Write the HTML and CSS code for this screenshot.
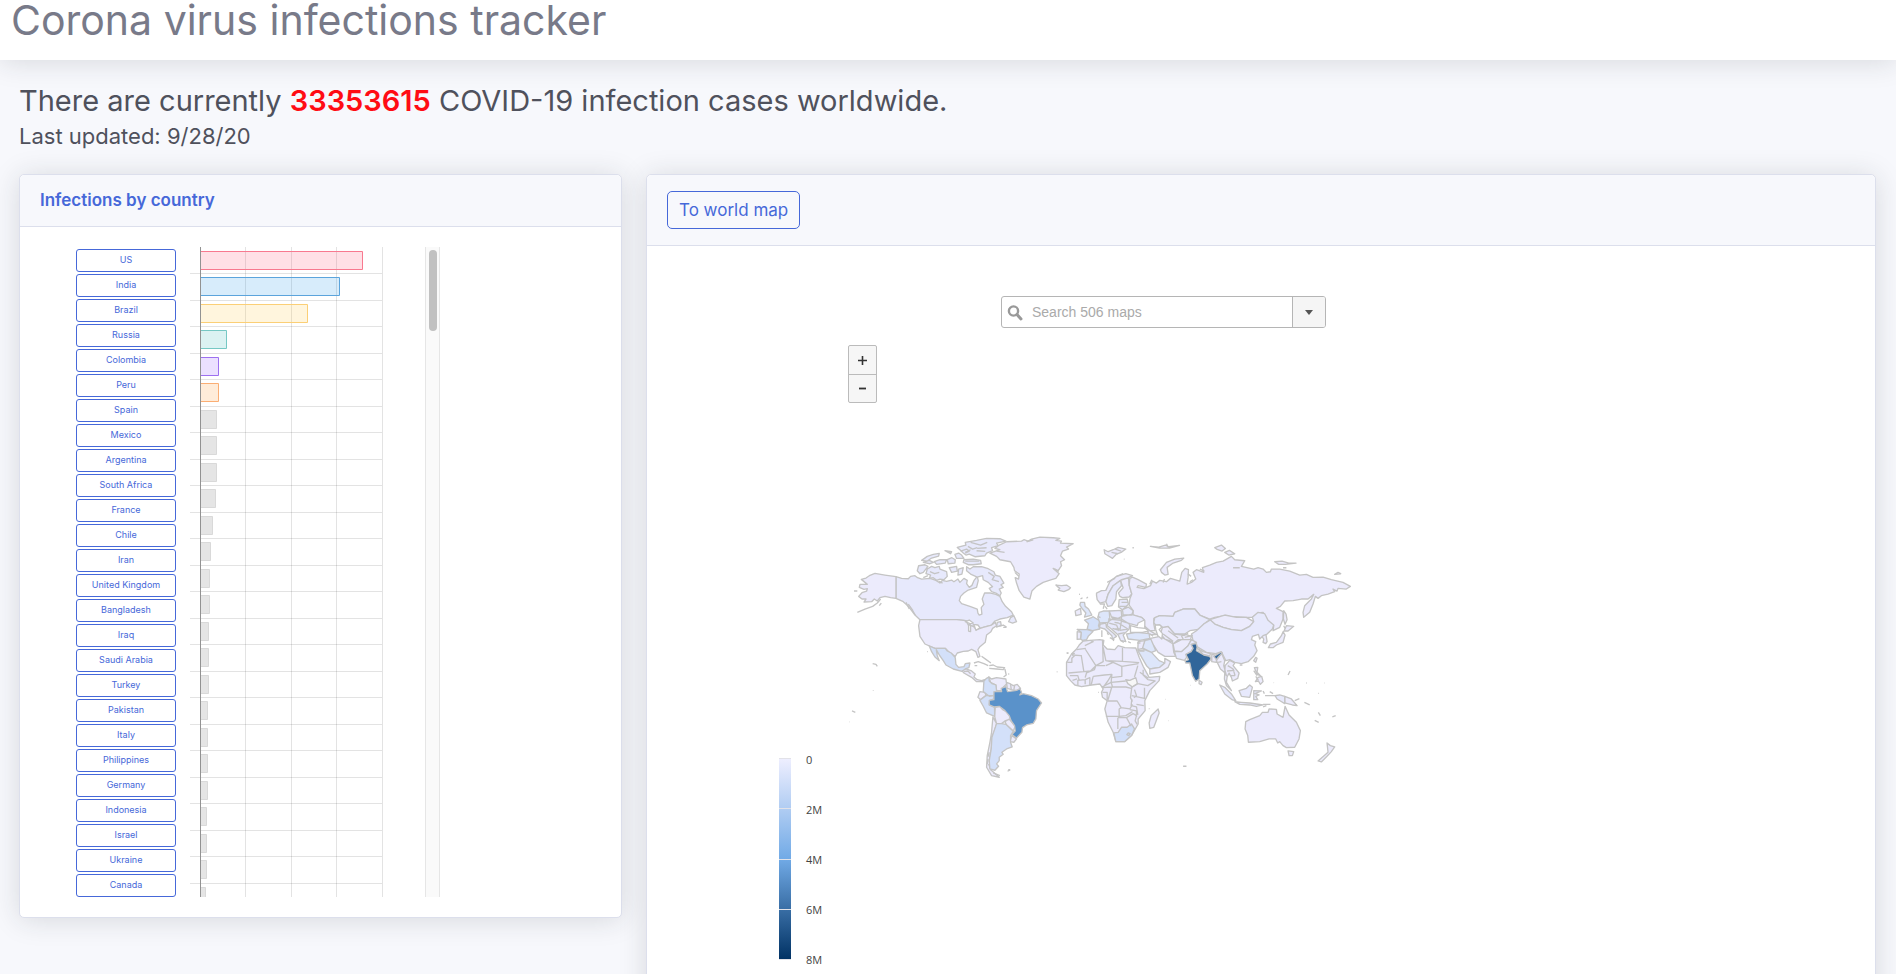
FILE: index.html
```html
<!DOCTYPE html>
<html lang="en">
<head>
<meta charset="utf-8">
<title>Corona virus infections tracker</title>
<link rel="stylesheet" href="styles.css">
</head>
<body>
<header class="topbar"><h1>Corona virus infections tracker</h1></header>
<main class="page">
  <section class="summary">
    <h2>There are currently <strong>33353615</strong> COVID-19 infection cases worldwide.</h2>
    <p>Last updated: 9/28/20</p>
  </section>
  <div class="cards">
    <section class="card">
      <div class="card-header"><h3>Infections by country</h3></div>
      <div class="card-body list-body">
        <div class="scroller">
          <div class="countries">
            <button>US</button><button>India</button><button>Brazil</button><button>Russia</button><button>Colombia</button><button>Peru</button><button>Spain</button><button>Mexico</button><button>Argentina</button><button>South Africa</button><button>France</button><button>Chile</button><button>Iran</button><button>United Kingdom</button><button>Bangladesh</button><button>Iraq</button><button>Saudi Arabia</button><button>Turkey</button><button>Pakistan</button><button>Italy</button><button>Philippines</button><button>Germany</button><button>Indonesia</button><button>Israel</button><button>Ukraine</button><button>Canada</button>
          </div>
          <svg class="bars" width="194" height="650" viewBox="0 0 194 650" aria-label="Infections bar chart"></svg>
          <div class="track"><div class="thumb"></div></div>
        </div>
      </div>
    </section>
    <section class="card">
      <div class="card-header map-header"><button class="outline">To world map</button></div>
      <div class="card-body map-body">
        <div class="search">
          <svg width="17" height="17" viewBox="0 0 17 17" aria-hidden="true"><circle cx="6.5" cy="7" r="4.6" fill="none" stroke="#999" stroke-width="2.4"/><path d="M10 10.500l4 4.500" stroke="#999" stroke-width="3" stroke-linecap="round"/></svg>
          <input type="text" placeholder="Search 506 maps" aria-label="Search maps">
          <button aria-label="Show maps"><svg width="8" height="5" viewBox="0 0 8 5"><path d="M0 0h8L4 5z" fill="#555"/></svg></button>
        </div>
        <div class="zoom">
          <button aria-label="Zoom in"><svg width="9" height="9" viewBox="0 0 9 9"><path d="M0 4.5h9M4.5 0v9" stroke="#333" stroke-width="1.6"/></svg></button>
          <button aria-label="Zoom out"><svg width="9" height="9" viewBox="0 0 9 9"><path d="M1 4.5h7" stroke="#333" stroke-width="1.8"/></svg></button>
        </div>
        <div class="map-row">
          <div class="legend">
            <div class="ramp"><i></i><i></i><i></i><i></i><i></i></div>
            <div class="ticks"><span>0</span><span>2M</span><span>4M</span><span>6M</span><span>8M</span></div>
          </div>
          <svg class="world" width="533" height="270" viewBox="0 0 1600 810" aria-label="World map">
            <g class="canada">
              <path d="M168,173L185,178 205,179 212,172 225,170 233,176 245,180 270,178 288,184 300,192 307,184 320,187 335,183 342,188 354,180 360,190 372,178 382,184 380,194 388,205 396,199 402,185 412,172 415,185 410,205 385,213 372,222 362,232 358,245 365,254 392,263 412,270 414,282 418,288 426,285 424,266 432,256 427,240 434,222 452,222 468,226 480,232 487,248 497,262 515,278 520,288 502,296 480,300 465,306 455,318 430,325 410,332 400,322 385,318 378,305 350,302 240,302 225,288 215,275 205,262 190,248 168,238z"/>
              <path d="M380,143L390,150 400,143 425,143 445,149 462,158 466,168 480,172 492,192 483,197 490,205 478,210 484,222 480,230 468,222 455,218 448,208 458,203 445,190 430,182 428,170 412,174 392,165 380,155z"/>
              <path d="M262,150L275,142 285,146 298,142 300,150 320,158 322,172 312,182 300,180 290,184 280,176 268,178 272,168 258,164zM236,140L255,137 264,142 250,160 240,164 232,155zM360,92L352,85 378,78 376,70 410,64 440,58 480,59 498,66 470,72 475,80 455,86 458,95 440,102 435,110 405,113 388,105 378,108 370,102zM372,122L400,120 422,124 424,134 400,137 385,137 370,130zM328,146L350,142 352,156 335,160zM356,150L370,146 366,165 354,168zM283,128L300,122 320,122 316,132 290,136zM245,124L262,112 280,106 298,103 296,111 275,117 262,126zM315,95L335,98 332,104zM345,106L356,102 365,108 372,118 350,118zM322,122L336,116 346,122 345,132 325,134zM512,296L522,290 530,308 518,312 506,308zM472,310L482,308 484,318 470,324zM250,130l20,4 10-4-12-6z"/>
              <path d="M490,325h10M478,322l12-4 10,6M362,96l18-6 8,6-12,6M392,70l30,8 20-8M412,88l28-2M410,95l26,2M376,126h42M445,160l18,12-6,10 20,6M205,255l14,20M198,250l10,20M210,262l16,26M250,176l14-6M296,186l12,6M384,82l14,8 14-4M376,100l16-8M270,158l14,6 14-4" fill="none"/>
            </g>
            <g class="lowest">
              <path d="M168,173L135,168 105,163 88,170 78,177 64,181 75,190 82,196 60,196 58,205 72,211 82,209 80,216 66,221 56,232 66,240 78,240 72,249 95,248 103,240 112,246 120,236 135,232 152,236 168,238z"/>
              <path d="M52,280L75,270 98,262 112,252 122,240M42,216h10M118,260l6-8" fill="none"/>
              <path d="M240,302L350,302 378,305 385,318 400,322 410,332 430,325 455,318 466,310 470,320 458,328 453,338 440,348 436,370 420,383 414,392 420,412 414,415 408,398 395,391 385,396 370,397 352,402 346,412 330,402 316,388 285,388 255,375 240,352 236,320z"/>
              <path d="M450,102L480,92 465,88 478,78 500,68 545,66 552,62 565,66 575,60 600,54 640,56 660,58 648,64 665,66 662,72 700,74 680,84 686,90 668,96 662,110 674,122 662,128 665,140 655,155 640,148 658,164 648,178 635,182 610,190 590,202 576,216 570,240 552,234 538,215 530,192 526,176 536,180 538,165 524,155 522,145 512,128 480,122 470,112z"/>
              <path d="M652,202L648,198 665,200 680,198 692,206 686,212 672,218 655,213 660,208z"/>
              <path d="M366,455L378,450 395,456 406,465 402,474 412,482 425,485 434,482 430,488 410,488 395,475 372,462zM447,474L455,480 470,476 498,480 500,495 490,505 485,515 470,515 468,498 452,490zM500,490L512,495 520,500 532,496 542,508 535,515 515,512 502,508zM420,518L436,520 438,530 422,542 414,535zM466,565L480,562 488,572 505,580 512,600 495,606 485,614 470,614 464,592zM495,608L508,600 526,622 520,636 500,618zM516,650L530,660 522,670 510,668zM459,594L470,614 464,635 456,655 454,690 448,725 455,755 478,775 455,770 440,745 442,710 450,670 455,640z"/>
              <path d="M512,495l2,16M524,500l-2,12M372,458l12-2 8,8M402,432L415,428 432,434 445,440M448,440l12-2 12,6 22,2-4,6-20-2-22-2M425,412l14,10 14,10M495,450l4,18-8,6M404,440h8M98,434l10,2 4,6M100,514v1M36,576l10,4M28,609h1M262,398h2M503,757l8-4M505,752h6M448,700l-4,14M444,720l-2,16M446,735l8,20M460,762l20,8M560,68l20-6M525,160l12,12M644,150l12,8M470,96l24,4M718,226h2M722,240l6-4M682,403h3M652,458v2M505,465h3" fill="none"/>
            </g>
            <g class="mid">
              <path d="M268,381L285,388 316,388 322,396 334,402 346,416 348,436 356,445 372,443 376,434 390,432 387,446 376,450 366,457 340,450 318,438 310,425 298,408 289,392 292,410 298,425 285,414 275,398z"/>
              <path d="M432,486L440,478 447,474 448,486 456,494 468,498 470,515 462,530 448,532 430,518zM420,544L438,530 462,530 462,540 450,544 448,558 464,565 464,592 440,582 430,562z"/>
              <path d="M470,614L485,614 498,616 520,637 512,650 512,670 517,684 500,690 486,700 490,706 478,715 478,725 470,735 476,742 465,754 450,750 448,725 454,690 456,655z"/>
            </g>
            <path class="brazil" d="M462,518L485,518 484,508 498,503 503,518 530,514 540,509 545,520 540,528 550,524 575,530 595,540 605,552 590,575 588,600 580,613 560,618 548,626 546,640 530,657 516,647 526,636 524,620 514,606 508,590 495,575 478,562 462,564 448,558 448,544 462,542z"/>
            <g class="lakes"><path d="M376,308l12-5 12,9-10,2zM386,318l6,0 0,20-6-2zM400,316l14,2 6,8-12,8-4-12z"/></g>
            <g transform="translate(630 0)">
              <g class="lowest">
                <path d="M140,228L140,222 155,215 168,214 180,188 200,172 228,164 248,170 236,176 215,182 190,200 175,225 168,248 150,252 142,242zM212,184L236,176 238,198 246,225 238,234 218,236 210,232 206,222 220,206z"/>
                <path d="M240,178L248,174 265,182 290,195 288,205 265,200 262,205 282,209 302,200 308,186 320,192 330,184 350,188 362,178 390,186 396,160 406,148 416,152 415,175 412,195 425,190 438,180 430,160 440,152 462,160 458,146 480,138 500,130 520,126 545,112 555,122 585,125 575,142 612,150 625,146 640,150 650,160 662,158 665,150 690,150 720,156 750,168 770,166 790,175 820,174 845,182 880,190 902,202 890,210 865,208 862,216 850,210 855,218 835,225 815,230 805,238 797,232 790,255 780,280 762,295 760,280 765,260 785,240 792,226 775,240 755,240 730,245 705,246 692,262 680,268 700,278 700,300 690,325 670,335 672,320 650,304 640,280 625,282 608,295 590,295 540,292 525,290 495,295 480,300 450,288 435,270 400,270 375,280 370,292 330,290 312,298 312,315 316,335 300,335 285,325 285,305 275,295 250,288 250,275 238,258 240,240 246,225 238,198z"/>
                <path d="M480,302L495,297 525,288 560,295 590,295 612,308 600,322 575,335 545,332 520,325 495,315z"/>
                <path d="M88,378L100,366 120,364 150,362 162,364 160,378 172,390 195,392 205,380 225,386 258,387 268,415 280,442 298,475 330,472 328,485 300,515 285,545 286,575 265,600 265,615 245,650 225,668 198,668 190,640 175,610 165,570 172,545 158,535 155,520 160,510 150,495 125,498 95,503 75,498 62,485 50,470 50,430 65,405 80,390z"/>
                <path d="M325,570L328,582 312,625 300,628 298,612 304,590zM335,160L332,152 350,130 375,120 402,117 395,124 370,132 352,145 355,166 345,168z"/>
                <path d="M163,92L175,98 190,92 205,85 228,90 214,100 200,105 188,118 175,110 165,104zM302,82l25,2 20-6 10,5 32-4-30,8-30,0zM495,86l20-8 12,10-10,8-15-5zM525,100l14-6 16,10-18,4zM675,128l22-2 20,6 22,0-32,4-20,0zM855,166l10-6 8,4z"/>
                <path d="M338,325L355,322 375,345 405,345 425,352 422,362 395,362 370,375 345,360 332,345zM302,358L330,352 345,360 368,368 372,400 378,412 345,412 325,400 312,380 302,368zM370,375L385,362 425,362 415,380 395,398 374,396zM442,388L460,398 482,404 480,411 460,406zM486,405L500,410 500,430 486,428zM448,484L457,490 454,497 448,494zM500,425L515,402 525,425 522,440 530,470 522,458 512,450zM526,440L540,424 555,432 550,440 568,462 564,478 548,486 545,475 538,462 532,474 530,490 545,515 530,500 524,480z"/>
                <path d="M635,350L648,342 652,368 648,374 640,370 642,360zM656,386L662,375 680,370 695,350 700,338 706,348 700,370 680,378 670,386zM703,336L710,320 732,322 715,336zM702,275L709,285 712,302 706,316 701,300zM612,425L618,415 622,418 618,430zM614,446L624,445 622,460 632,470 622,466zM617,488L625,475 636,472 640,488 632,496 626,486zM285,322l15,13 20,12-22,0z"/>
                <path d="M588,608L600,602 630,590 638,580 655,580 658,570 680,571 682,585 700,595 706,562 718,588 740,610 752,635 748,660 735,685 710,686 700,680 690,668 684,672 678,660 658,660 630,668 596,670 594,650 586,630zM715,696L732,698 728,710 718,710zM832,672L842,680 855,684 845,698 832,712 815,729 805,726 835,700zM705,532L725,540 742,560 728,558 705,552z"/>
              </g>
              <g class="canada">
                <path d="M175,225L190,200 212,184 215,200 200,218 198,240 186,260 174,262 168,248zM215,292L245,286 275,295 284,303 265,312 262,320 240,314 215,306zM218,272L235,264 250,275 246,288 220,288zM208,242L232,240 236,256 218,272 206,264zM178,276L214,274 216,292 205,298 185,294zM175,308L190,298 215,300 240,316 238,330 228,340 220,348 228,368 212,364 205,348 185,330 172,320zM149,316L168,312 170,325 190,342 200,352 188,360 186,350 165,330 150,326z"/>
                <path d="M312,310L315,296 330,290 370,292 375,280 400,270 435,270 450,288 480,302 462,315 455,330 420,335 405,345 375,345 355,322 338,325 330,318 318,320z"/>
                <path d="M462,315L482,303 495,315 520,325 545,332 575,335 600,322 612,308 608,295 625,280 645,284 655,304 672,318 668,330 652,345 640,350 630,360 626,346 608,352 605,362 618,368 615,378 622,395 612,412 595,428 575,434 555,430 540,422 528,425 515,398 498,404 470,400 445,385 430,366 425,345 440,335z"/>
                <path d="M380,418L374,398 395,398 415,380 425,362 440,370 425,376 430,388 424,398 410,406 410,416 404,424zM510,498L525,505 545,525 558,545 548,543 525,525zM555,548L575,550 600,552 640,558 620,562 600,558 570,556zM568,515L590,508 600,498 608,505 600,535 575,532zM612,515L635,516 616,524 628,528 618,532 624,542 612,542zM676,530L690,528 705,532 705,554 692,546 682,540z"/>
              </g>
              <g class="mid">
                <path d="M104,303L125,296 130,293 150,306 146,320 150,330 128,335 112,330 116,314zM82,331L112,332 130,337 115,352 110,362 98,364 92,360 94,340zM192,642L205,640 215,625 232,625 245,615 254,630 245,650 225,668 198,668z"/>
              </g>
              <g class="low">
                <path d="M148,280L160,276 178,276 180,298 175,310 150,312 144,296zM92,250L104,250 106,262 116,270 126,288 104,294 108,282 98,270 90,258zM230,345L260,340 298,344 300,358 270,364 235,360zM264,395L285,392 305,400 328,425 345,432 330,445 300,450 290,440zM285,365L303,360 318,395 305,400 276,386z"/>
              </g>
              <g class="lowest"><path d="M76,276L92,268 94,286 78,290zM82,338L94,340 92,360 82,361zM265,368L285,365 278,388 264,392zM300,450L330,445 345,432 345,418 362,428 355,445 330,460 300,465z"/></g>
              <path class="india" d="M424,376L440,374 442,385 440,395 462,408 480,412 484,420 472,435 450,455 448,480 438,487 428,470 420,432 408,432 406,426 416,422 408,406 424,398 430,388zM492,412L512,400 518,402 505,415 500,422z"/>
              <path class="nodata" d="M228,482L240,484 258,476 263,494 248,504 234,494z"/>
              <g class="borders"><path d="M105,380l25-12-8-4M80,392l28-4M52,430h14v-12l10-10M66,408l28,2M65,405l10-2M106,390l32,50 22-12-2-66M94,408l8,50-46,4M102,458l20-2 16-16 28,0M138,440l-4,12-24,10-4,14M160,385l8,40 22,4M168,425l50,2V386M218,427l50,4M168,440l22-10 26,12v30l-32,4M216,442l50-8M60,470l24,0 4,14M68,484l14-4M84,500v-16l22-2v14M106,482l14-6v22M130,472l-6,26M130,472l34-4 22-2-12,20-12,16M186,466l-2,24-28,14M184,490l44-4M184,490l4,14 40,0 16,4M264,440l-10,34M264,494l30,6 22-14-22-4-14-14 0-16M264,494l-18,10-4,32 6,12M284,506v34M246,530l38,8M186,504l-12,40M186,504l-30,2M158,520h14v22M172,546l30,0 12,20 26,4 8-14M214,566l-6,4v22M168,592l40,0 20-2 20-12M204,596v34M204,596h26l14,26M230,596l20-12 10,6-4,16 6,10M240,572l20,4 0,18M260,556l22,4M246,540l-2,20 16,4 4,24M270,460l26,18M235,642l6,2-4,6-6-3zM254,512l6,18-8,6"/>
              <path d="M215,250h20M208,262h24M190,298l-4-4M175,300l40,4-4,26-16,0M178,312l22,6 8,18M206,312l28,18-24,4M205,345l20-4M188,328l20,6M194,310l12,2M152,296l-8-4M150,312l0,8M340,345l30,22M355,335l30,22M375,345l28,4 12-6M395,350l6,12M405,355l24-6M300,344l10,8M318,340l10,4-4,8M268,396h16M505,430l10-2M534,440l16,10 6,20M532,456l22-2M540,470l16,0M150,255h14l-4,14M166,262l6,8"/>
              <path d="M156,334v20M180,356l12,6-2,4M172,190l14-8 10-4M200,172l20-8M235,368l8,4M262,372h10M88,226h2M110,238l4-4M248,86h4M222,120h2M185,100l20,4M196,90l18,6M350,74l6,12M50,402h6M22,458v1M145,520h2M347,541h1M297,569h2M355,605h1M400,742h10M422,499h1M715,468l6-12M672,491h1M770,492h2M823,492h1M806,523h2M735,545l14-6M764,550l16,8M806,580l6,10M795,604l12,6M848,594l10-4M640,516l4,8M646,530l30,0M660,518l10,6M570,438h8M640,556l22,0M640,564l10-4M702,320l4,8M700,146h10M612,455l10,15M618,472l8,12M172,340l4,8M212,364l10,6M300,196l6-14M340,190l4-10M420,188l10-6M414,164l10,8M450,150l14,6M550,146l20,0"/></g>
            </g>
            <g class="lakes"><path d="M872,320l22,6 22,2 10,8-18,4-36,0zM946,318l14,0 6,6-8,8 10,12-2,16-12-10-6-18z"/></g>
          </svg>
        </div>
      </div>
    </section>
  </div>
</main>
<script src="chart.js"></script>
</body>
</html>
```
FILE: styles.css
```css
* { box-sizing: border-box; }
html { overflow: hidden; }
body { margin: 0; background: #f7f8fc; color: #4f515c; font-family: Inter, "Open Sans", sans-serif; }
h1, h2, h3, p { margin: 0; font-weight: 400; }
button, input { font: inherit; margin: 0; }
.topbar { background: #fff; height: 60px; padding: 0 11px; box-shadow: 0 2px 28px rgba(33, 40, 50, .15); }
.topbar h1 { font-size: 41px; line-height: 41px; color: #787a89; }
.page { padding: 24px 20px 0 19px; }
.summary { padding-bottom: 24px; }
.summary h2 { font-size: 29px; line-height: 34px; margin-bottom: 4px; }
.summary strong { color: #ff0c14; font-weight: 600; }
.summary p { font-size: 22px; line-height: 28px; }
.cards { display: grid; grid-template-columns: 603fr 1230fr; gap: 24px; align-items: start; }
.card { background: #fff; border: 1px solid #dcdfec; border-radius: 5px; box-shadow: 0 2px 28px rgba(33, 40, 50, .15); }
.card-header { background: #f7f8fc; border-bottom: 1px solid #dcdfec; border-radius: 5px 5px 0 0; padding: 16px 20px; }
.card-header h3 { color: #4668d9; font-size: 17px; line-height: 19px; font-weight: 600; }
.list-body { padding: 20px 56px; }
.scroller { display: flex; height: 650px; overflow: hidden; }
.countries { display: flex; flex-direction: column; gap: 2px; padding-top: 2px; width: 100px; margin-right: 14px; }
.countries button { flex: none; height: 23px; padding: 0 0 2px; background: #fff; border: 1px solid #4668d9; border-radius: 3px; color: #4668d9; font-size: 9px; line-height: 18px; }
.bars { flex: none; }
.track { width: 15px; margin-left: 41px; background: #fafafa; border: solid #e6e6e6; border-width: 0 1px; padding: 3px; }
.thumb { width: 8px; height: 81px; border-radius: 4px; background: #c1c1c1; }
.map-header { padding: 16px 20px; }
.outline { display: block; height: 38px; padding: 0 11px; background: transparent; border: 1px solid #4668d9; border-radius: 5px; color: #4668d9; font-size: 17px; }
.map-body { padding: 50px 20px 60px 112px; }
.search { display: flex; align-items: center; width: 325px; height: 32px; margin-left: 242px; border: 1px solid #b5b5b5; border-radius: 3px; padding-left: 5px; }
.search input { flex: 1; min-width: 0; border: 0; padding: 0 8px; outline: 0; background: transparent; font: 14px "Liberation Sans", Arial, sans-serif; color: #333; }
.search input::placeholder { color: #aaa; opacity: 1; }
.search button { display: grid; place-items: center; width: 33px; height: 30px; padding: 0; border: 0; border-left: 1px solid #b5b5b5; background: #f5f5f5; border-radius: 0 2px 2px 0; }
.zoom { display: flex; flex-direction: column; width: 29px; margin: 17px 0 0 89px; border: 1px solid #bbb; border-radius: 2px; background: #f6f6f6; }
.zoom button { display: grid; place-items: center; height: 28px; padding: 0; border: 0; background: transparent; }
.zoom button + button { border-top: 1px solid #bbb; }
.map-row { display: flex; align-items: flex-start; padding-top: 116px; }
.legend { display: flex; width: 61px; margin: 239px 0 0 20px; gap: 15px; }
.ramp { display: flex; flex-direction: column; justify-content: space-between; width: 12px; height: 202px; background: linear-gradient(#efefff, #71aae6 50%, #003163); }
.ramp i { height: 1px; background: #e2e2e8; }
.ticks { display: flex; flex-direction: column; gap: 34px; margin-top: -6px; font: 11px/16px "Open Sans", sans-serif; color: #444; }
.world { flex: none; stroke: #c4c4c4; stroke-width: 4; stroke-linejoin: round; }
.lowest { fill: #ecebfc; }
.canada { fill: #e7e9fc; }
.low { fill: #dde6fa; }
.mid { fill: #d3e0f9; }
.brazil { fill: #5a92ca; }
.india { fill: #31669a; }
.nodata { fill: #f7f7f7; }
.lakes { fill: #fff; }
.borders { fill: none; }
```
FILE: chart.js
```js
const svg = document.querySelector('.bars');
const colors = ['255,99,132', '54,162,235', '255,206,86', '75,192,192', '153,102,255', '255,159,64'];
const strokes = ['#f8798f', '#5ba4dc', '#fbcf76', '#76c8c4', '#9d70f0', '#fbae74'];
const widths = [162, 139, 107, 26, 18, 18, 16, 16, 16, 15, 12, 10, 9, 9, 8, 8, 8, 7, 7, 7, 7, 6, 6, 6, 5, 4];
const add = (tag, attrs) => {
  const node = document.createElementNS('http://www.w3.org/2000/svg', tag);
  for (const key in attrs) node.setAttribute(key, attrs[key]);
  svg.appendChild(node);
};
let grid = '';
for (let i = 1; i < 25; i++) grid += `M0 ${Math.floor(i * 26.5) + .5}H192`;
[55, 101, 146, 192].forEach(x => { grid += `M${x + .5} 0V650`; });
add('path', { d: grid, stroke: 'rgba(0,0,0,.11)' });
widths.forEach((w, i) => {
  const y = Math.floor(i * 26.5) + 4.5;
  add('rect', { x: 10.5, y, width: w, height: 18, fill: i < 6 ? `rgba(${colors[i]},.2)` : 'rgba(0,0,0,.1)' });
  add('path', { d: `M10.5 ${y}h${w}v18h${-w}`, fill: 'none', stroke: strokes[i] || 'rgba(0,0,0,.1)' });
});
add('path', { d: 'M10.5 0V650', stroke: '#929292' });
```
